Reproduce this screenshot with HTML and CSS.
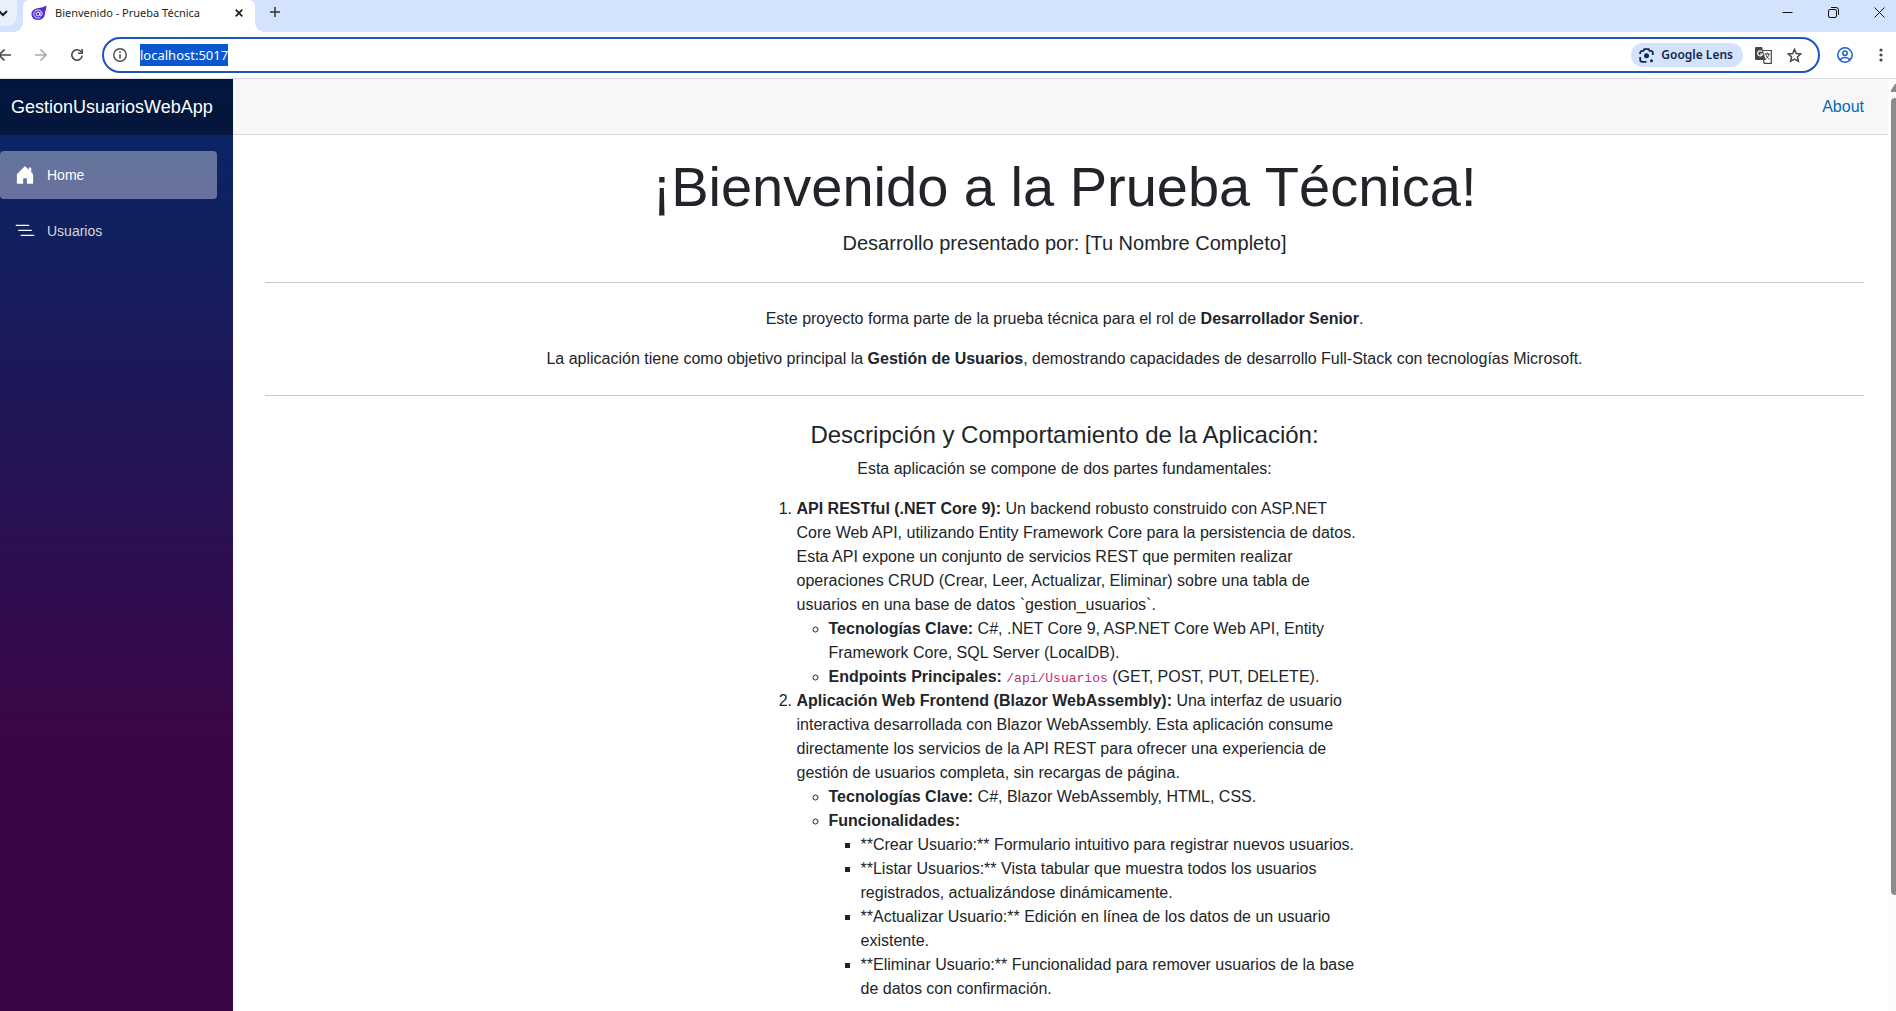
FILE: index.html
```html
<!DOCTYPE html>
<html lang="es">
<head>
<meta charset="utf-8">
<meta name="viewport" content="width=device-width, initial-scale=1">
<title>Bienvenido - Prueba Técnica</title>
<link rel="stylesheet" href="styles.css">
</head>
<body>
<div class="browser">
  <header class="tab-strip">
    <button class="tab-search" type="button" aria-label="Buscar pestañas">
      <svg width="8" height="8" viewBox="0 0 8 8"><path d="M-1 2l4 4 4-4" fill="none" stroke="#1f1f1f" stroke-width="2"/></svg>
    </button>
    <div class="tab">
      <svg class="tab-icon" width="16" height="16" viewBox="0 0 16 16">
        <path d="M7.500 3C10 2.600 13 2 15.300.5c.2 2.500-.2 4.500-1.300 6.500C14.500 11.500 11.500 15 7 15S.5 12.200.5 9 3.500 3.500 7.500 3z" fill="#512bd4"/>
        <path d="M9 6.800v3c0 1.500 2.200 1.200 2.200-.8 0-2.600-2-4-4.200-4S2.700 6.800 2.700 9s1.900 4 4.300 4c1.100 0 1.900-.3 2.600-.7" fill="none" stroke="#fff" stroke-width=".9"/>
        <circle cx="7" cy="9" r="1.900" fill="none" stroke="#fff" stroke-width=".9"/>
      </svg>
      <span class="tab-title">Bienvenido - Prueba Técnica</span>
      <button class="icon-button" type="button" aria-label="Cerrar pestaña">
        <svg width="8" height="8" viewBox="0 0 8 8"><path d="M.7.7l6.600 6.600M7.300.7L.7 7.300" stroke="#1f1f1f" stroke-width="1.700"/></svg>
      </button>
    </div>
    <button class="icon-button new-tab" type="button" aria-label="Nueva pestaña">
      <svg width="10" height="10" viewBox="0 0 10 10"><path d="M5 0v10M0 5h10" stroke="#333" stroke-width="1.500"/></svg>
    </button>
    <div class="window-controls">
      <button class="icon-button" type="button" aria-label="Minimizar">
        <svg width="11" height="11" viewBox="0 0 11 11"><path d="M.5 5.500h10" stroke="#111"/></svg>
      </button>
      <button class="icon-button" type="button" aria-label="Restaurar">
        <svg width="11" height="11" viewBox="0 0 11 11" fill="none" stroke="#111"><rect x=".5" y="2.500" width="8" height="8" rx="1.500"/><path d="M3 .5h5a2.500 2.500 0 0 1 2.500 2.500v5"/></svg>
      </button>
      <button class="icon-button" type="button" aria-label="Cerrar">
        <svg width="11" height="11" viewBox="0 0 11 11"><path d="M.5.5l10 10M10.500.5l-10 10" stroke="#111"/></svg>
      </button>
    </div>
  </header>

  <div class="toolbar">
    <nav class="history" aria-label="Historial">
      <button class="icon-button" type="button" aria-label="Atrás">
        <svg width="11" height="12" viewBox="0 0 11 12"><path d="M11 6H0M4.500.5L-1 6l5.500 5.500" fill="none" stroke="#474747" stroke-width="1.600"/></svg>
      </button>
      <button class="icon-button" type="button" aria-label="Adelante">
        <svg width="12" height="12" viewBox="0 0 12 12"><path d="M0 6h11M5.500.5L11 6l-5.500 5.500" fill="none" stroke="#aaa" stroke-width="1.600"/></svg>
      </button>
      <button class="icon-button" type="button" aria-label="Recargar">
        <svg width="12" height="12" viewBox="0 0 12 12"><path d="M10.300 3A5.200 5.200 0 1 0 11.200 6.700" fill="none" stroke="#474747" stroke-width="1.600"/><path d="M12 0v5H7V3.400h3.400V0z" fill="#474747"/></svg>
      </button>
    </nav>
    <div class="omnibox">
      <svg width="14" height="14" viewBox="0 0 14 14"><circle cx="7" cy="7" r="6.200" fill="none" stroke="#474747" stroke-width="1.400"/><path d="M7 6.200v4.300M7 3.500v1.500" stroke="#474747" stroke-width="1.500"/></svg>
      <input class="address" type="text" aria-label="Dirección" value="localhost:5017">
      <button class="lens" type="button">
        <svg width="15" height="15" viewBox="0 0 15 15" fill="none" stroke="#12284c" stroke-width="1.800"><path d="M1.200 6V4.800a2 2 0 0 1 2-2h1.300L5.300 1.200h4.400l.8 1.600h1.300a2 2 0 0 1 2 2V7M1.200 9v2.800a2 2 0 0 0 2 2h4.300"/><circle cx="7.500" cy="7.800" r="2.500" fill="#12284c" stroke="none"/><circle cx="12.500" cy="12.800" r="1.500" fill="#12284c" stroke="none"/></svg>
        Google Lens
      </button>
      <button class="icon-button" type="button" aria-label="Traducir">
        <svg width="17" height="17" viewBox="0 0 17 17"><path d="M1 0h6l3.500 13H1a1 1 0 0 1-1-1V1a1 1 0 0 1 1-1z" fill="#474747"/><path d="M7 4.700A2.500 2.500 0 1 0 7.500 7H5" fill="none" stroke="#fff" stroke-width="1.200"/><path d="M8 3.500h8.300v12.800H9.200L8.500 13" fill="none" stroke="#474747" stroke-width="1.200"/><path d="M9.500 7h5.500M12.200 5.500V7M14 7c-.5 2.500-2 4.300-4 5.500M10.800 7.500c.6 2 2 3.800 4 5" fill="none" stroke="#474747"/></svg>
      </button>
      <button class="icon-button" type="button" aria-label="Añadir a marcadores">
        <svg width="15" height="15" viewBox="0 0 15 15"><path d="M7.500 1.400l1.800 4.100 4.500.4-3.400 3 1 4.400-3.900-2.300-3.900 2.300 1-4.400-3.400-3 4.500-.4z" fill="none" stroke="#474747" stroke-width="1.500"/></svg>
      </button>
    </div>
    <button class="icon-button" type="button" aria-label="Perfil">
      <svg width="16" height="16" viewBox="0 0 16 16" fill="none" stroke="#1b5fc9" stroke-width="1.500"><circle cx="8" cy="8" r="7.200"/><circle cx="8" cy="6.300" r="2.200"/><path d="M3 13c1.300-1.800 3-2.400 5-2.400s3.700.6 5 2.400"/></svg>
    </button>
    <button class="icon-button menu" type="button" aria-label="Menú">
      <svg width="4" height="14" viewBox="0 0 4 14" fill="#474747"><circle cx="2" cy="2" r="1.600"/><circle cx="2" cy="7" r="1.600"/><circle cx="2" cy="12" r="1.600"/></svg>
    </button>
  </div>

  <div class="page">
    <aside class="sidebar">
      <div class="brand-row"><a class="brand" href="#">GestionUsuariosWebApp</a></div>
      <nav class="nav-menu">
        <a class="nav-link active" href="#">
          <svg width="20" height="20" viewBox="0 0 16 16" fill="#fff"><path d="M6.500 14.500v-3.505c0-.245.25-.495.5-.495h2c.25 0 .5.25.5.5v3.500a.5.5 0 0 0 .5.5h4a.5.5 0 0 0 .5-.5v-7a.5.5 0 0 0-.146-.354L13 5.793V2.500a.5.5 0 0 0-.5-.5h-1a.5.5 0 0 0-.5.5v1.293L8.354 1.146a.5.5 0 0 0-.708 0l-6 6A.5.5 0 0 0 1.500 7.500v7a.5.5 0 0 0 .5.5h4a.5.5 0 0 0 .5-.5Z"/></svg>
          Home
        </a>
        <a class="nav-link" href="#">
          <svg width="20" height="20" viewBox="0 0 16 16" fill="#fff"><path d="M4.500 11.500A.5.5 0 0 1 5 11h10a.5.5 0 0 1 0 1H5a.5.5 0 0 1-.5-.5zm-2-4A.5.5 0 0 1 3 7h10a.5.5 0 0 1 0 1H3a.5.5 0 0 1-.5-.5zm-2-4A.5.5 0 0 1 1 3h10a.5.5 0 0 1 0 1H1a.5.5 0 0 1-.5-.5z"/></svg>
          Usuarios
        </a>
      </nav>
    </aside>

    <main class="main">
      <div class="top-row"><a class="about" href="#">About</a></div>
      <article class="content">
        <h1>¡Bienvenido a la Prueba Técnica!</h1>
        <p class="lead">Desarrollo presentado por: [Tu Nombre Completo]</p>
        <hr>
        <p>Este proyecto forma parte de la prueba técnica para el rol de <strong>Desarrollador Senior</strong>.</p>
        <p>La aplicación tiene como objetivo principal la <strong>Gestión de Usuarios</strong>, demostrando capacidades de desarrollo Full-Stack con tecnologías Microsoft.</p>
        <hr>
        <h2>Descripción y Comportamiento de la Aplicación:</h2>
        <p>Esta aplicación se compone de dos partes fundamentales:</p>
        <ol class="parts">
          <li><strong>API RESTful (.NET Core 9):</strong> Un backend robusto construido con ASP.NET Core Web API, utilizando Entity Framework Core para la persistencia de datos. Esta API expone un conjunto de servicios REST que permiten realizar operaciones CRUD (Crear, Leer, Actualizar, Eliminar) sobre una tabla de usuarios en una base de datos `gestion_usuarios`.
            <ul>
              <li><strong>Tecnologías Clave:</strong> C#, .NET Core 9, ASP.NET Core Web API, Entity Framework Core, SQL Server (LocalDB).</li>
              <li><strong>Endpoints Principales:</strong> <code>/api/Usuarios</code> (GET, POST, PUT, DELETE).</li>
            </ul>
          </li>
          <li><strong>Aplicación Web Frontend (Blazor WebAssembly):</strong> Una interfaz de usuario interactiva desarrollada con Blazor WebAssembly. Esta aplicación consume directamente los servicios de la API REST para ofrecer una experiencia de gestión de usuarios completa, sin recargas de página.
            <ul>
              <li><strong>Tecnologías Clave:</strong> C#, Blazor WebAssembly, HTML, CSS.</li>
              <li><strong>Funcionalidades:</strong>
                <ul>
                  <li>**Crear Usuario:** Formulario intuitivo para registrar nuevos usuarios.</li>
                  <li>**Listar Usuarios:** Vista tabular que muestra todos los usuarios registrados, actualizándose dinámicamente.</li>
                  <li>**Actualizar Usuario:** Edición en línea de los datos de un usuario existente.</li>
                  <li>**Eliminar Usuario:** Funcionalidad para remover usuarios de la base de datos con confirmación.</li>
                </ul>
              </li>
            </ul>
          </li>
        </ol>
      </article>
    </main>

    <div class="scrollbar" aria-hidden="true">
      <svg width="5" height="8" viewBox="0 0 5 8"><path d="M0 8V6l4-6h1v8z" fill="#8b8b8b"/></svg>
      <div class="thumb"></div>
    </div>
  </div>
</div>
</body>
</html>
```

FILE: styles.css
```css
* {
  box-sizing: border-box;
}

body {
  margin: 0;
  background: #fff;
  color: #212529;
  font: 16px/24px "Liberation Sans", Arial, sans-serif;
}

svg {
  display: block;
  flex: none;
}

button {
  font: inherit;
  color: inherit;
  border: 0;
  background: none;
  padding: 0;
}

.browser {
  display: flex;
  flex-direction: column;
  height: 100vh;
  overflow: hidden;
}

/* Browser window: tabs */

.tab-strip {
  flex: none;
  display: flex;
  height: 32px;
  background: #d3e3fd;
  font: 12px/16px "Noto Sans", sans-serif;
  color: #1f1f1f;
}

.tab-search {
  width: 17px;
  height: 26px;
  background: #e8effd;
  border-radius: 0 0 10px 0;
}

.tab {
  position: relative;
  display: flex;
  align-items: center;
  width: 232px;
  margin-left: 6px;
  padding: 0 12px 7px 8px;
  background: #fff;
  border-radius: 6px 6px 0 0;
}

.tab::before,
.tab::after {
  content: "";
  position: absolute;
  bottom: 0;
  width: 10px;
  height: 10px;
}

.tab::before {
  right: 100%;
  background: radial-gradient(circle at 0 0, transparent 10px, #fff 10px);
}

.tab::after {
  left: 100%;
  background: radial-gradient(circle at 100% 0, transparent 10px, #fff 10px);
}

.tab-title {
  flex: 1;
  margin-left: 8px;
  font-size: 11px;
  white-space: nowrap;
}

.new-tab {
  margin: 0 0 8px 15px;
}

.window-controls {
  display: flex;
  align-items: center;
  gap: 35px;
  margin-left: auto;
  padding: 0 11px 8px 0;
}

/* Browser window: address bar */

.toolbar {
  flex: none;
  display: flex;
  align-items: center;
  height: 47px;
  padding-right: 13px;
  border-bottom: 1px solid #dcdcdc;
  font: 13px/22px "Noto Sans", sans-serif;
}

.history {
  display: flex;
  align-items: center;
  gap: 24px;
  margin-right: 19px;
}

.omnibox {
  flex: 1;
  display: flex;
  align-items: center;
  height: 36px;
  margin-right: 17px;
  padding: 0 16px 0 9px;
  border: 2px solid #1b57ba;
  border-radius: 18px;
}

.address {
  field-sizing: content;
  height: 22px;
  margin-left: 13px;
  padding: 0;
  border: 0;
  background: #0b57d0;
  color: #fff;
  font: inherit;
}

.lens {
  display: flex;
  align-items: center;
  gap: 7px;
  height: 24px;
  margin-left: auto;
  margin-right: 12px;
  padding: 0 10px 0 8px;
  border-radius: 12px;
  background: #d3e3fd;
  color: #12284c;
  font-size: 12px;
  font-weight: 600;
}

.lens + .icon-button {
  margin-right: 15px;
}

.menu {
  margin-left: 26px;
}

/* Application */

.page {
  flex: 1;
  display: flex;
  min-height: 0;
}

.sidebar {
  flex: none;
  width: 233px;
  background: linear-gradient(180deg, #052767 0%, #3a0647 70%);
}

.brand-row {
  display: flex;
  align-items: center;
  height: 56px;
  padding-left: 11px;
  background: rgba(0, 0, 0, 0.4);
}

.brand {
  color: #fff;
  font-size: 18px;
  text-decoration: none;
}

.nav-menu {
  display: flex;
  flex-direction: column;
  gap: 8px;
  padding: 16px 16px 0 0;
}

.nav-link {
  display: flex;
  align-items: center;
  gap: 12px;
  height: 48px;
  padding-left: 15px;
  border-radius: 4px;
  color: #d7d7d7;
  font-size: 14px;
  text-decoration: none;
}

.nav-link.active {
  background: rgba(255, 255, 255, 0.37);
  color: #fff;
}

.main {
  flex: 1;
  min-width: 0;
  overflow: hidden;
}

.top-row {
  display: flex;
  align-items: center;
  justify-content: flex-end;
  height: 56px;
  padding-right: 24px;
  border-bottom: 1px solid #d6d5d5;
  background: #f7f7f7;
}

.about {
  color: #006bb7;
  text-decoration: none;
}

.content {
  padding: 18px 24px 0 32px;
  text-align: center;
}

h1 {
  margin: 0 0 8px;
  font-size: 56px;
  font-weight: 400;
  line-height: 67px;
}

h2 {
  margin: 0 0 8px;
  font-size: 24px;
  font-weight: 400;
  line-height: 29px;
}

p {
  margin: 0 0 16px;
}

.lead {
  font-size: 20px;
  line-height: 30px;
}

hr {
  margin: 24px 0;
  border: 0;
  border-top: 1px solid #c7c8c9;
}

.parts {
  max-width: 600px;
  margin: 0 auto;
  padding-left: 32px;
  text-align: left;
}

.parts ul {
  margin: 0;
  padding-left: 32px;
}

code {
  color: #c02d76;
  font: 13px "Liberation Mono", monospace;
}

/* Page scroll indicator */

.scrollbar {
  flex: none;
  display: flex;
  flex-direction: column;
  align-items: flex-end;
  gap: 6px;
  width: 8px;
  padding-top: 5px;
  background: #fcfcfc;
}

.thumb {
  width: 5px;
  height: 86%;
  border-radius: 4px 0 0 4px;
  background: #8b8b8b;
}
```
